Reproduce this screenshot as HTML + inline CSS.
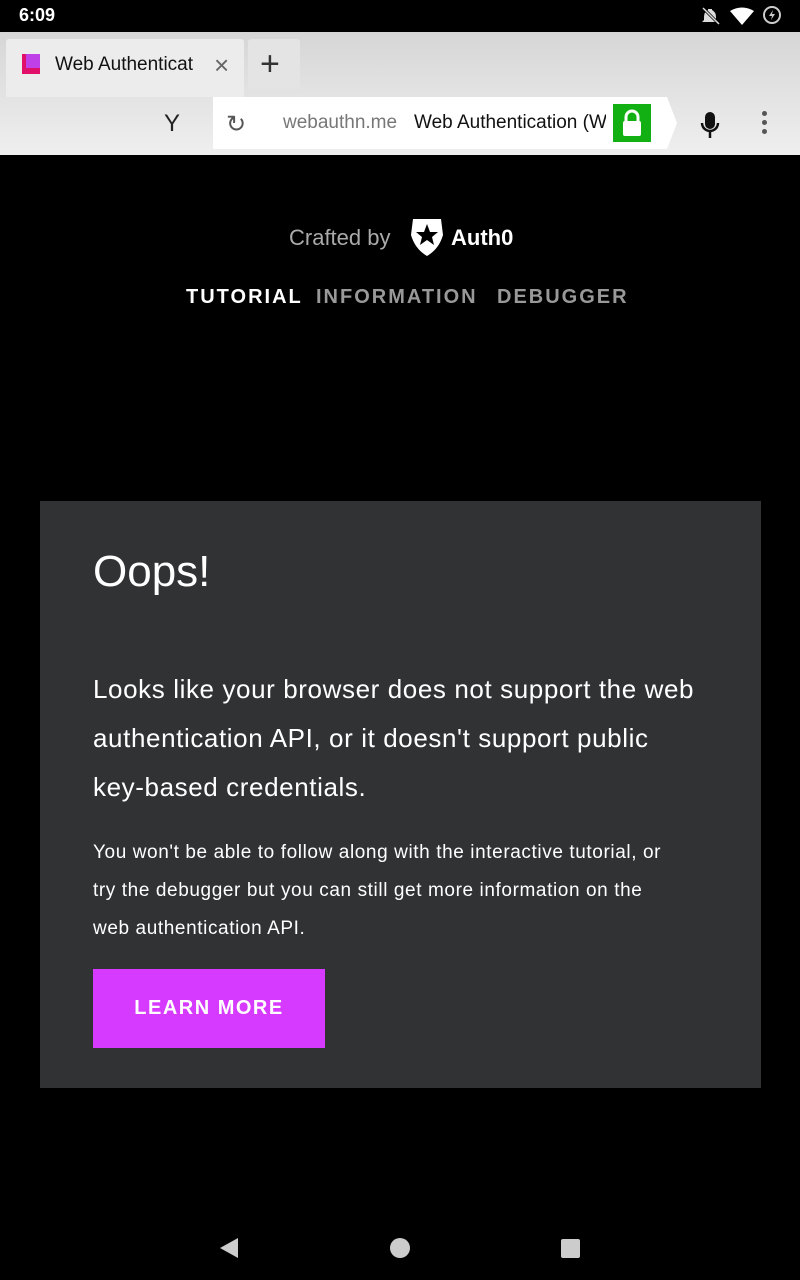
<!DOCTYPE html>
<html><head><meta charset="utf-8"><style>
*{margin:0;padding:0;box-sizing:border-box}
body{width:800px;height:1280px;background:#000;font-family:"Liberation Sans",sans-serif;position:relative;overflow:hidden;color:#fff}
.abs{position:absolute}
.nw{white-space:nowrap}
</style></head><body>
<div class="abs" style="left:0;top:0;width:800px;height:32px;background:#000">
 <div class="abs" style="left:19px;top:5px;font-size:18px;font-weight:bold">6:09</div>
 <svg class="abs" style="left:700px;top:6px" width="90" height="20">
  <path d="M8 3 L8 4 Q4 6 4 11 L4 14 L2 16 L18 16 L16 14 L16 11 Q16 6 12 4 L12 3Z" fill="#ddd"/><line x1="3" y1="2" x2="19" y2="18" stroke="#000" stroke-width="3"/><line x1="3" y1="2" x2="19" y2="18" stroke="#ddd" stroke-width="1.5"/>
  <path d="M30 5 Q42 -2 54 5 L42 19Z" fill="#fff"/>
  <circle cx="72" cy="9" r="8" fill="none" stroke="#ccc" stroke-width="2"/><path d="M73 4 L69 10 L72 10 L71 14 L75 8 L72 8Z" fill="#ccc"/>
 </svg>
</div>
<div class="abs" style="left:0;top:32px;width:800px;height:123px;background:linear-gradient(#d6d6d6,#efefef)">
 <div class="abs" style="left:6px;top:7px;width:238px;height:58px;background:#ececec;border-radius:3px 3px 0 0"></div>
 <div class="abs" style="left:248px;top:7px;width:52px;height:50px;background:#e4e4e4;border-radius:3px"></div>
 <div class="abs" style="left:22px;top:22px;width:18px;height:20px;background:#e0106a"></div>
 <div class="abs" style="left:26px;top:22px;width:14px;height:14px;background:#c040e8"></div>
 <div class="abs nw" style="left:55px;top:22px;font-size:19px;color:#111;width:145px;overflow:hidden">Web Authenticat</div>
 <div class="abs" style="left:214px;top:18px;font-size:26px;color:#666">×</div>
 <div class="abs" style="left:260px;top:13px;font-size:34px;color:#333">+</div>
 <div class="abs" style="left:164px;top:78px;font-size:24px;color:#222">Y</div>
 <div class="abs" style="left:213px;top:65px;width:452px;height:52px;background:#fff"></div>
 <svg class="abs" style="left:660px;top:65px" width="18" height="52"><path d="M0 0 L7 0 L17 26 L7 52 L0 52Z" fill="#fff"/></svg>
 <div class="abs" style="left:226px;top:78px;font-size:24px;color:#555">↻</div>
 <div class="abs" style="left:283px;top:80px;font-size:19px;color:#777">webauthn.me</div>
 <div class="abs" style="left:414px;top:80px;font-size:19px;color:#111;width:192px;overflow:hidden;white-space:nowrap">Web Authentication (W</div>
 <div class="abs" style="left:613px;top:72px;width:38px;height:38px;background:#12b012"></div>
 <svg class="abs" style="left:613px;top:72px" width="38" height="38"><path d="M13 17 V13 A6 6 0 0 1 25 13 V17" stroke="#fff" stroke-width="3" fill="none"/><rect x="10" y="17" width="18" height="15" rx="2" fill="#fff"/></svg>
 <svg class="abs" style="left:698px;top:78px" width="24" height="30"><rect x="7" y="2" width="10" height="17" rx="5" fill="#111"/><path d="M4 13 A8 8 0 0 0 20 13" stroke="#111" stroke-width="2.5" fill="none"/><line x1="12" y1="21" x2="12" y2="28" stroke="#111" stroke-width="2.5"/></svg>
 <div class="abs" style="left:762px;top:79px;width:5px;height:5px;border-radius:3px;background:#555;box-shadow:0 9px 0 #555,0 18px 0 #555"></div>
</div>
<div class="abs" style="left:289px;top:225px;font-size:22px;color:#aaa">Crafted by</div>
<svg class="abs" style="left:409px;top:217px" width="36" height="40"><path d="M4 2 H32 L34 18 Q30 32 18 39 Q6 32 2 18Z" fill="#fff"/><path d="M18 7 L21 15 L29 15 L23 20 L25 28 L18 23 L11 28 L13 20 L7 15 L15 15Z" fill="#000"/></svg>
<div class="abs" style="left:451px;top:225px;font-size:22px;font-weight:bold">Auth0</div>
<div class="abs nw" style="left:186px;top:286px;font-size:20px;font-weight:bold;letter-spacing:2px">
 <span class="abs" style="left:0;color:#fff">TUTORIAL</span>
 <span class="abs" style="left:130px;color:#999">INFORMATION</span>
 <span class="abs" style="left:311px;color:#999">DEBUGGER</span>
</div>
<div class="abs" style="left:40px;top:501px;width:721px;height:587px;background:#313234">
 <div class="abs" style="left:53px;top:46px;font-size:44px">Oops!</div>
 <div class="abs nw" style="left:53px;top:164px;font-size:26px;line-height:49px;letter-spacing:0.6px">Looks like your browser does not support the web<br>authentication API, or it doesn't support public<br>key-based credentials.</div>
 <div class="abs nw" style="left:53px;top:333px;font-size:19px;line-height:38px;letter-spacing:0.6px">You won't be able to follow along with the interactive tutorial, or<br>try the debugger but you can still get more information on the<br>web authentication API.</div>
 <div class="abs" style="left:53px;top:468px;width:232px;height:79px;background:#d63aff;font-size:20px;font-weight:bold;letter-spacing:1.5px;text-align:center;line-height:79px">LEARN MORE</div>
</div>
<svg class="abs" style="left:0;top:1228px" width="800" height="40">
 <path d="M238 10 L238 30 L220 20Z" fill="#ccc"/>
 <circle cx="400" cy="20" r="10" fill="#ccc"/>
 <rect x="561" y="11" width="19" height="19" rx="2" fill="#ccc"/>
</svg>
</body></html>
